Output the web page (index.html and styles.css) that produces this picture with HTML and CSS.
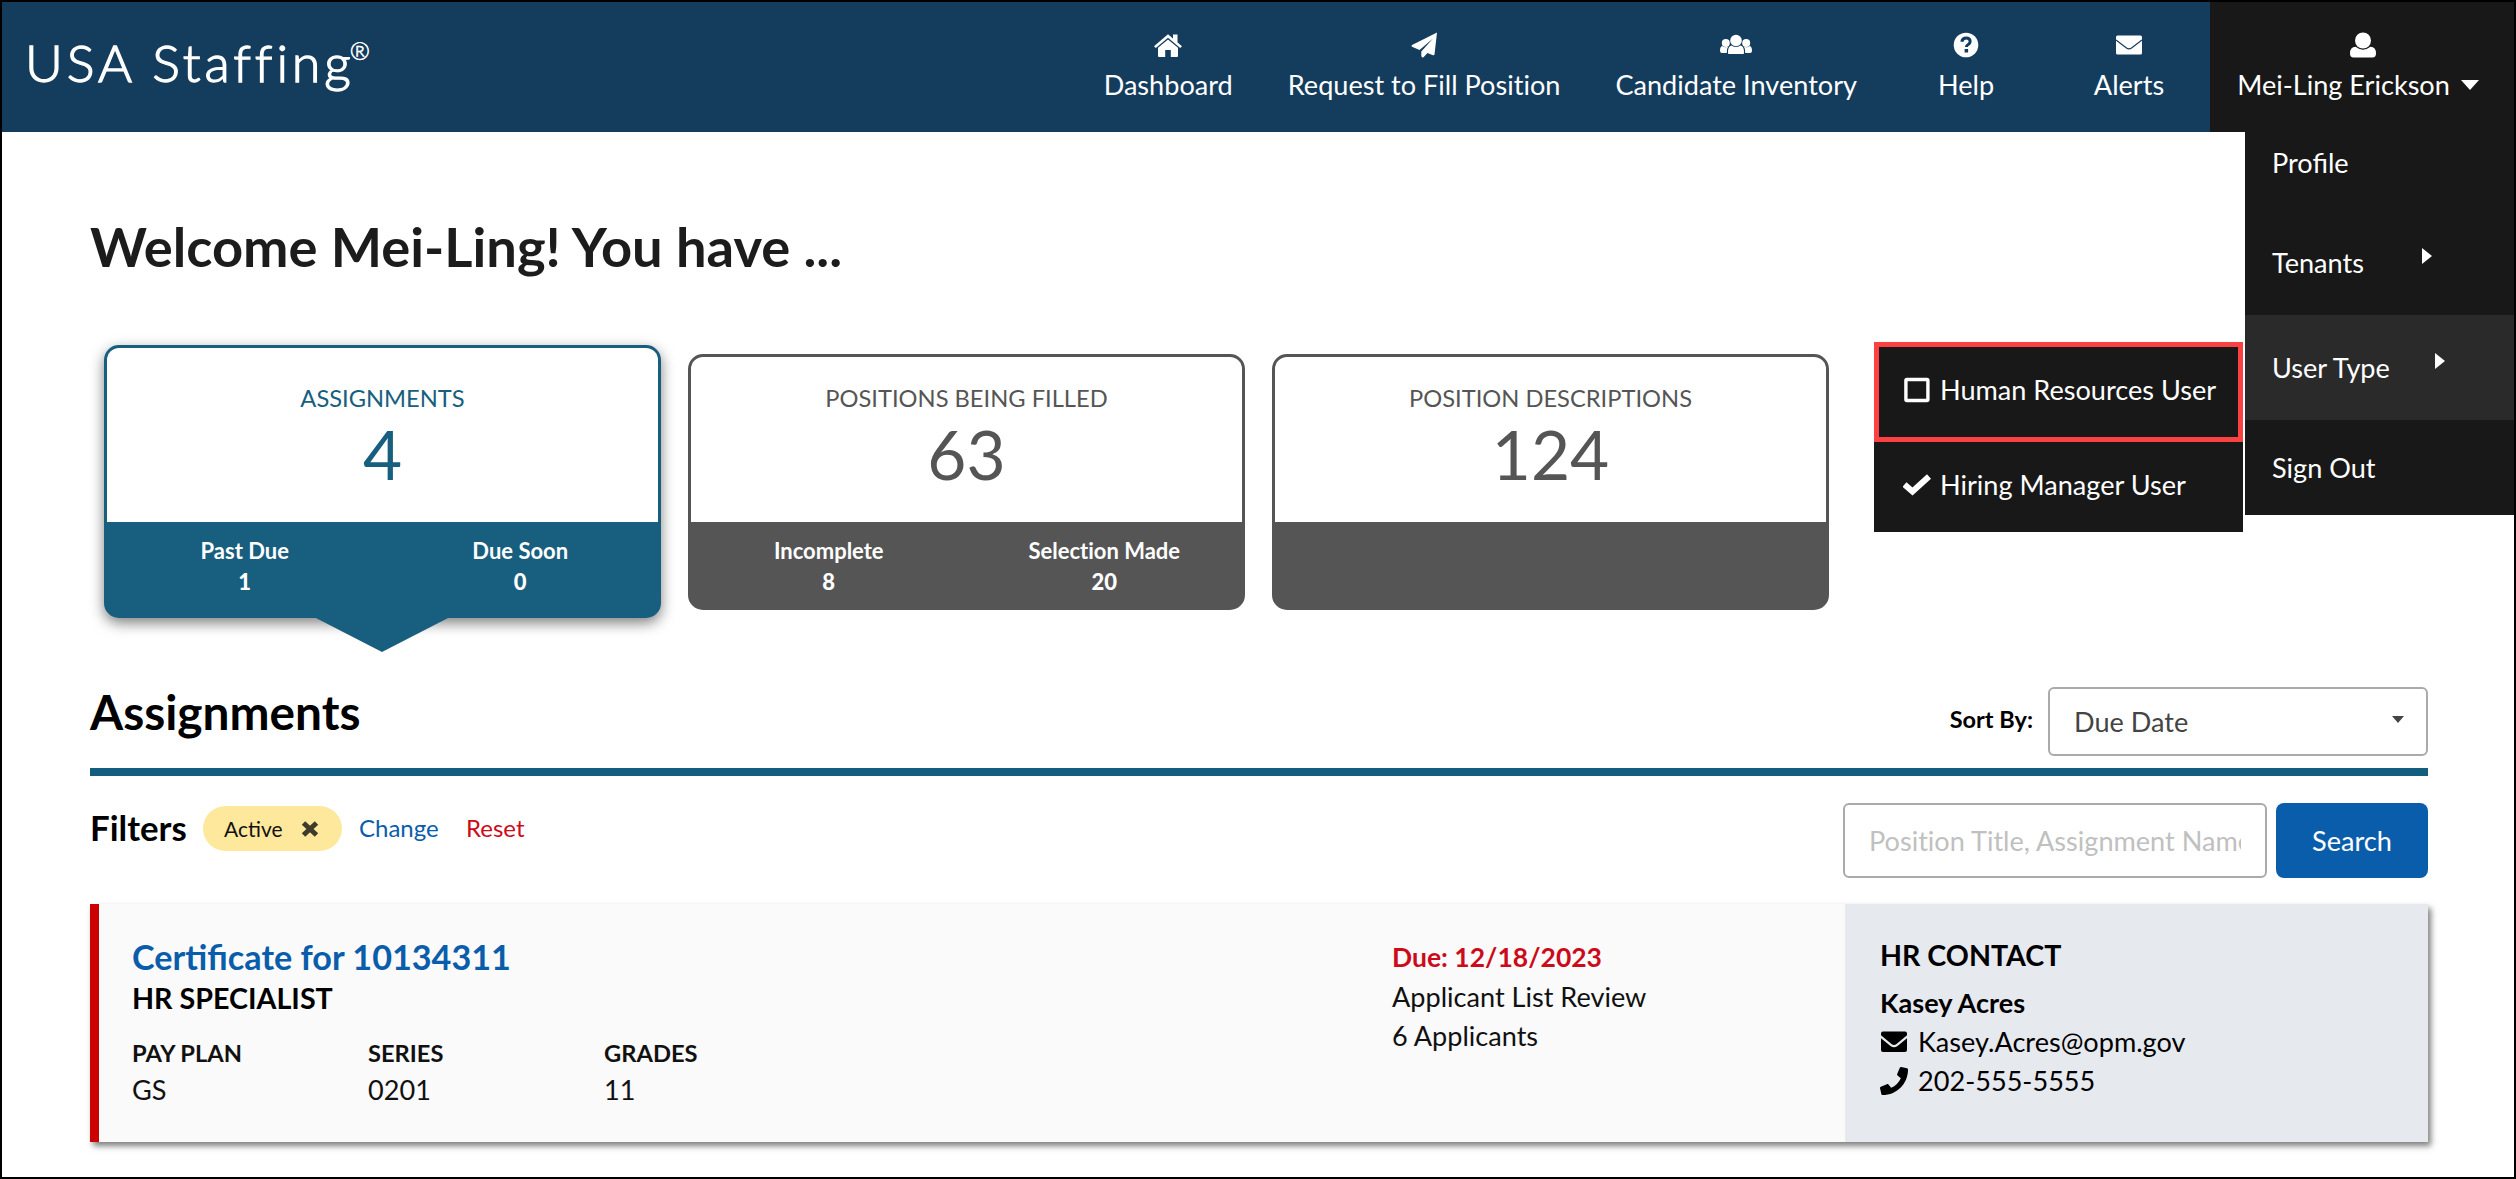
FILE: index.html
```html
<!DOCTYPE html>
<html lang="en">
<head>
    <meta charset="UTF-8">
    <meta name="viewport" content="width=device-width, initial-scale=1.0">
    <title>USA Staffing</title>
    <link rel="stylesheet" href="styles.css">
</head>
<body>
    <header class="header">
        <div class="logo">USA Staffing<sup>&reg;</sup></div>
        <nav class="nav">
            <a class="nav-item">
                <svg class="nav-icon" width="30" height="26" viewBox="0 0 30 26"><path d="M15 2.2 L29 14.2 L27.2 16 L15 5.8 L2.8 16 L1 14.2 Z M20 2.5h4.5v8L20 7z M15 7.6 L25 15.8V24q0 1-1 1h-6.2v-7h-5.6v7H6q-1 0-1-1v-8.2z"/></svg>
                <span class="nav-label">Dashboard</span>
            </a>
            <a class="nav-item">
                <svg class="nav-icon" width="30" height="26" viewBox="0 0 30 26"><path d="M28 .5 L25.5 22.5 Q25 23.5 24 23.2 L18.5 21 L14.5 25.2 Q12.7 26 12.3 24 V19.5 L24 6.5 L10.5 18 L3 14.8 Q1.8 14 3 13 Z"/></svg>
                <span class="nav-label">Request to Fill Position</span>
            </a>
            <a class="nav-item">
                <svg class="nav-icon" width="34" height="26" viewBox="0 0 34 26"><circle cx="17" cy="8.5" r="5.8"/><circle cx="6.8" cy="11" r="4"/><circle cx="27.2" cy="11" r="4"/><path d="M9.2 22q-1-7.6 3.6-8.4 4.2 3 8.4 0 4.6.8 3.6 8.4z M7.8 21H3q-2 0-2-2.2 0-4.3 2.2-4.8 3 2.2 6 .6-1.8 2.4-1.4 6.4z M26.2 21H31q2 0 2-2.2 0-4.3-2.2-4.8-3 2.2-6 .6 1.8 2.4 1.4 6.4z"/></svg>
                <span class="nav-label">Candidate Inventory</span>
            </a>
            <a class="nav-item">
                <svg class="nav-icon" width="26" height="26" viewBox="0 0 26 26"><circle cx="13" cy="13" r="12.3"/><path class="cut" d="M8.8 9.8q.6-3.8 4.4-3.8t4 3.3q0 2-2 3.2-1.8 1-1.8 2.6"/><rect class="cut-fill" x="11.6" y="17" width="3.5" height="3.5"/></svg>
                <span class="nav-label">Help</span>
            </a>
            <a class="nav-item">
                <svg class="nav-icon" width="26" height="26" viewBox="0 0 26 26"><rect y="3.5" width="26" height="19" rx="1.5"/><path class="cut-thin" d="M0 8 L10.5 16q2.5 1.8 5 0L26 8"/></svg>
                <span class="nav-label">Alerts</span>
            </a>
            <a class="nav-item nav-user">
                <svg class="nav-icon" width="28" height="26" viewBox="0 0 28 26"><ellipse cx="14" cy="8.5" rx="8" ry="8"/><path d="M4.5 25.5Q1 25.5 1 21.5 1 15 6.5 14.8q7.5 5.7 15 0Q27 15 27 21.5q0 4-3.5 4z"/></svg>
                <span class="nav-label">Mei-Ling Erickson<i class="caret-down"></i></span>
            </a>
        </nav>
    </header>

    <ul class="menu">
        <li>Profile</li>
        <li>Tenants <i class="caret-right"></i></li>
        <li class="selected">User Type <i class="caret-right"></i></li>
        <li>Sign Out</li>
    </ul>
    <ul class="submenu">
        <li class="highlight">
            <svg width="28" height="28" viewBox="0 0 28 28"><rect x="2.9" y="3.5" width="22" height="21" rx="1" fill="none" stroke="#fff" stroke-width="3.4"/></svg>
            <span>Human Resources User</span>
        </li>
        <li>
            <svg width="28" height="28" viewBox="0 0 28 28"><path d="M1.5 13.5 L9.5 20.500 L26 5.500" fill="none" stroke="#fff" stroke-width="6"/></svg>
            <span>Hiring Manager User</span>
        </li>
    </ul>

    <main class="content">
        <h1>Welcome Mei-Ling! You have ...</h1>

        <div class="cards">
            <div class="card active">
                <div class="card-top">
                    <div class="card-title">ASSIGNMENTS</div>
                    <div class="card-count">4</div>
                </div>
                <div class="card-bottom">
                    <div>Past Due<br><b>1</b></div>
                    <div>Due Soon<br><b>0</b></div>
                </div>
            </div>
            <div class="card">
                <div class="card-top">
                    <div class="card-title">POSITIONS BEING FILLED</div>
                    <div class="card-count">63</div>
                </div>
                <div class="card-bottom">
                    <div>Incomplete<br><b>8</b></div>
                    <div>Selection Made<br><b>20</b></div>
                </div>
            </div>
            <div class="card">
                <div class="card-top">
                    <div class="card-title">POSITION DESCRIPTIONS</div>
                    <div class="card-count">124</div>
                </div>
                <div class="card-bottom"></div>
            </div>
        </div>

        <div class="section-head">
            <h2>Assignments</h2>
            <div class="sort">
                <label>Sort By:</label>
                <div class="select">Due Date <i class="select-caret"></i></div>
            </div>
        </div>

        <div class="toolbar">
            <div class="filters">
                <h3>Filters</h3>
                <span class="pill">Active
                    <svg width="18" height="16" viewBox="0 0 18 16"><path d="M2.5 2 L15.5 14 M15.5 2 L2.5 14" stroke="#3f3b2c" stroke-width="5"/></svg>
                </span>
                <a class="change">Change</a>
                <a class="reset">Reset</a>
            </div>
            <div class="search">
                <div class="search-box"><span>Position Title, Assignment Name</span></div>
                <button class="search-btn">Search</button>
            </div>
        </div>

        <div class="result">
            <div class="result-main">
                <div class="result-title">Certificate for 10134311</div>
                <div class="result-role">HR SPECIALIST</div>
                <div class="facts">
                    <div><b>PAY PLAN</b>GS</div>
                    <div><b>SERIES</b>0201</div>
                    <div><b>GRADES</b>11</div>
                </div>
            </div>
            <div class="result-due">
                <b>Due: 12/18/2023</b>
                <p>Applicant List Review</p>
                <p>6 Applicants</p>
            </div>
            <div class="contact">
                <h4>HR CONTACT</h4>
                <b>Kasey Acres</b>
                <p>
                    <svg width="28" height="28" viewBox="0 0 28 28"><path d="M3 3.5h22q2 0 2 2v1.8L16.5 16q-2.5 1.8-5 0L1 7.3V5.5q0-2 2-2z M1 10.3l9.5 7.8q3.5 2.4 7 0L27 10.3V22q0 2-2 2H3q-2 0-2-2z"/></svg>
                    <span>Kasey.Acres@opm.gov</span>
                </p>
                <p>
                    <svg width="28" height="28" viewBox="0 0 512 512"><path d="M493.4 24.6l-104-24c-11.3-2.6-22.9 3.3-27.5 13.9l-48 112c-4.2 9.8-1.4 21.3 6.9 28l60.6 49.6c-36 76.7-98.9 140.5-177.2 177.2l-49.6-60.6c-6.8-8.3-18.2-11.1-28-6.9l-112 48C3.9 366.5-2 378.1.6 389.4l24 104C27.1 504.2 36.7 512 48 512c256.1 0 464-207.5 464-464 0-11.2-7.7-20.9-18.600-23.400z"/></svg>
                    <span>202-555-5555</span>
                </p>
            </div>
        </div>
    </main>
</body>
</html>
```
FILE: styles.css
```css
* {
    margin: 0;
    padding: 0;
    box-sizing: border-box;
}
body {
    height: 1179px;
    border: 2px solid #000;
    background: #fff;
    color: #111;
    font-family: Lato, "Liberation Sans", sans-serif;
    font-size: 27.1px;
    line-height: 39px;
    overflow: hidden;
}
ul {
    list-style: none;
}

/* header */
.header {
    display: flex;
    justify-content: space-between;
    height: 130px;
    background: #143c5d;
    color: #fff;
}
.logo {
    padding: 27px 0 0 23px;
    font-size: 52px;
    line-height: 66px;
    font-weight: 300;
    letter-spacing: 3.9px;
    -webkit-text-stroke: 1.3px #fff;
}
.logo sup {
    font-size: 24px;
    line-height: 0;
    letter-spacing: 0;
    vertical-align: 22px;
    margin-left: -5px;
    -webkit-text-stroke: 0.6px #fff;
}
.nav {
    display: flex;
    font-variant-ligatures: none;
}
.nav-item {
    display: flex;
    flex-direction: column;
    align-items: center;
    min-width: 163px;
    padding: 30px 27px 0 28px;
    white-space: nowrap;
}
.nav-icon {
    fill: #fff;
}
.nav-label {
    display: flex;
    align-items: center;
    margin-top: 10px;
    line-height: 33px;
}
.cut {
    fill: none;
    stroke: #143c5d;
    stroke-width: 3;
}
.cut-fill {
    fill: #143c5d;
}
.cut-thin {
    fill: none;
    stroke: #143c5d;
    stroke-width: 1.2;
}
.nav-user {
    width: 304px;
    background: #181818;
}
.nav-user .nav-label {
    margin-right: 9px;
}
.caret-down {
    margin-left: 11px;
    border: 9px solid transparent;
    border-top: 10px solid #fff;
    border-bottom: 0;
}

/* user menu */
.menu {
    position: absolute;
    top: 132px;
    left: 2245px;
    width: 269px;
    background: #181818;
    color: #fff;
}
.menu li {
    display: flex;
    height: 95px;
    padding: 28px 0 0 27px;
}
.menu li:first-child {
    height: 78px;
    padding-top: 11px;
}
.menu li:nth-child(2),
.menu li.selected {
    height: 105px;
    padding-top: 33px;
}
.menu li.selected {
    background: #2a2a2a;
}
.caret-right {
    align-self: flex-start;
    margin: 5px 0 0 58px;
    border: 8px solid transparent;
    border-left: 10px solid #fff;
    border-right: 0;
}
.selected .caret-right {
    margin-left: 45px;
}
.submenu {
    position: absolute;
    top: 342px;
    left: 1874px;
    width: 369px;
    background: #181818;
    color: #fff;
}
.submenu li {
    display: flex;
    gap: 9px;
    height: 90px;
    padding: 23px 0 0 29px;
}
.submenu li.highlight {
    height: 100px;
    padding: 23px 0 0 24px;
    border: 5px solid #fb4142;
}
.submenu svg {
    margin-top: 6px;
}

/* page content */
.content {
    padding: 79px 86px 0 88px;
}
h1 {
    font-size: 54.3px;
    line-height: 70px;
    color: #1c1c1c;
}
.cards {
    display: flex;
    gap: 27px;
    height: 274px;
    margin-top: 64px;
    padding-left: 14px;
    align-items: flex-start;
}
.card {
    width: 557px;
    height: 256px;
    margin-top: 9px;
    border: 3px solid #555;
    border-radius: 15px;
    background: #555;
    color: #555;
    text-align: center;
}
.card-top {
    height: 165px;
    padding-top: 24px;
    border-radius: 12px 12px 0 0;
    background: #fff;
}
.card-title {
    font-size: 23.7px;
    line-height: 35px;
}
.card-count {
    font-size: 67.5px;
    line-height: 76px;
}
.card-bottom {
    display: flex;
    padding-top: 13px;
    color: #fff;
    font-size: 22px;
    font-weight: bold;
    line-height: 31px;
    font-variant-ligatures: none;
}
.card-bottom div {
    flex: 1;
}
.card.active {
    position: relative;
    height: 273px;
    margin-top: 0;
    border-color: #185e7e;
    background: #185e7e;
    color: #185e7e;
    box-shadow: 0 5px 14px rgba(0, 0, 0, 0.5);
}
.active .card-top {
    height: 174px;
    padding-top: 33px;
}
.card.active::after {
    content: "";
    position: absolute;
    top: 269px;
    left: 207px;
    border: 68px solid transparent;
    border-top: 35px solid #185e7e;
    border-bottom: 0;
}

/* assignments heading */
.section-head {
    display: flex;
    justify-content: space-between;
    height: 157px;
    padding-top: 68px;
    border-bottom: 8px solid #135d7e;
    color: #000;
}
h2 {
    font-size: 47.8px;
    line-height: 50px;
}
.sort {
    display: flex;
    gap: 15px;
}
.sort label {
    padding-top: 13px;
    font-size: 23.5px;
    font-weight: bold;
}
.select {
    display: flex;
    justify-content: space-between;
    width: 380px;
    height: 69px;
    padding: 13px 22px 0 24px;
    border: 2px solid #aaa;
    border-radius: 6px;
    color: #444;
}
.select-caret {
    margin-top: 14px;
    border: 6px solid transparent;
    border-top: 7px solid #444;
    border-bottom: 0;
}

/* filters and search */
.toolbar {
    display: flex;
    justify-content: space-between;
    height: 128px;
    padding-top: 27px;
}
.filters {
    display: flex;
    align-items: flex-start;
    padding-top: 3px;
    font-size: 24px;
}
h3 {
    width: 113px;
    font-size: 34.8px;
    line-height: 43px;
    color: #000;
}
.pill {
    display: flex;
    align-items: center;
    gap: 18px;
    width: 139px;
    height: 45px;
    margin-right: 17px;
    padding-left: 21px;
    border-radius: 23px;
    background: #fde89b;
    font-size: 21px;
}
.change {
    width: 107px;
    padding-top: 2px;
    color: #0a5dab;
}
.reset {
    padding-top: 2px;
    color: #cc0a1a;
}
.search {
    display: flex;
    gap: 9px;
}
.search-box {
    width: 424px;
    height: 75px;
    padding: 16px 24px 0;
    border: 2px solid #aaa;
    border-radius: 6px;
    color: #c0c0c0;
    white-space: nowrap;
    font-variant-ligatures: none;
}
.search-box span {
    display: block;
    overflow: hidden;
}
.search-btn {
    width: 152px;
    height: 75px;
    border: 0;
    border-radius: 8px;
    background: #0a5dab;
    color: #fff;
    font: inherit;
}

/* result row */
.result {
    display: flex;
    height: 238px;
    border-left: 9px solid #cc0000;
    background: #fafafa;
    box-shadow: 3px 4px 6px rgba(0, 0, 0, 0.5);
}
.result-main {
    flex: 1;
    padding: 32px 0 0 33px;
}
.result-title {
    font-size: 34.2px;
    line-height: 42px;
    font-weight: bold;
    color: #0a5dab;
}
.result-role {
    margin-top: 1px;
    font-size: 28.7px;
    line-height: 38px;
    font-weight: bold;
    color: #000;
}
.facts {
    display: flex;
    margin-top: 18px;
    line-height: 37px;
}
.facts div {
    width: 236px;
}
.facts b {
    display: block;
    font-size: 23.7px;
    line-height: 36px;
}
.result-due {
    width: 453px;
    padding-top: 33px;
}
.result-due b {
    font-size: 26.5px;
    color: #cc0a1a;
}
.contact {
    width: 583px;
    padding: 32px 0 0 35px;
    background: #e6e9ee;
    color: #000;
}
.contact h4 {
    height: 47px;
    font-size: 28.6px;
}
.contact p {
    display: flex;
    align-items: center;
    gap: 10px;
}
```
